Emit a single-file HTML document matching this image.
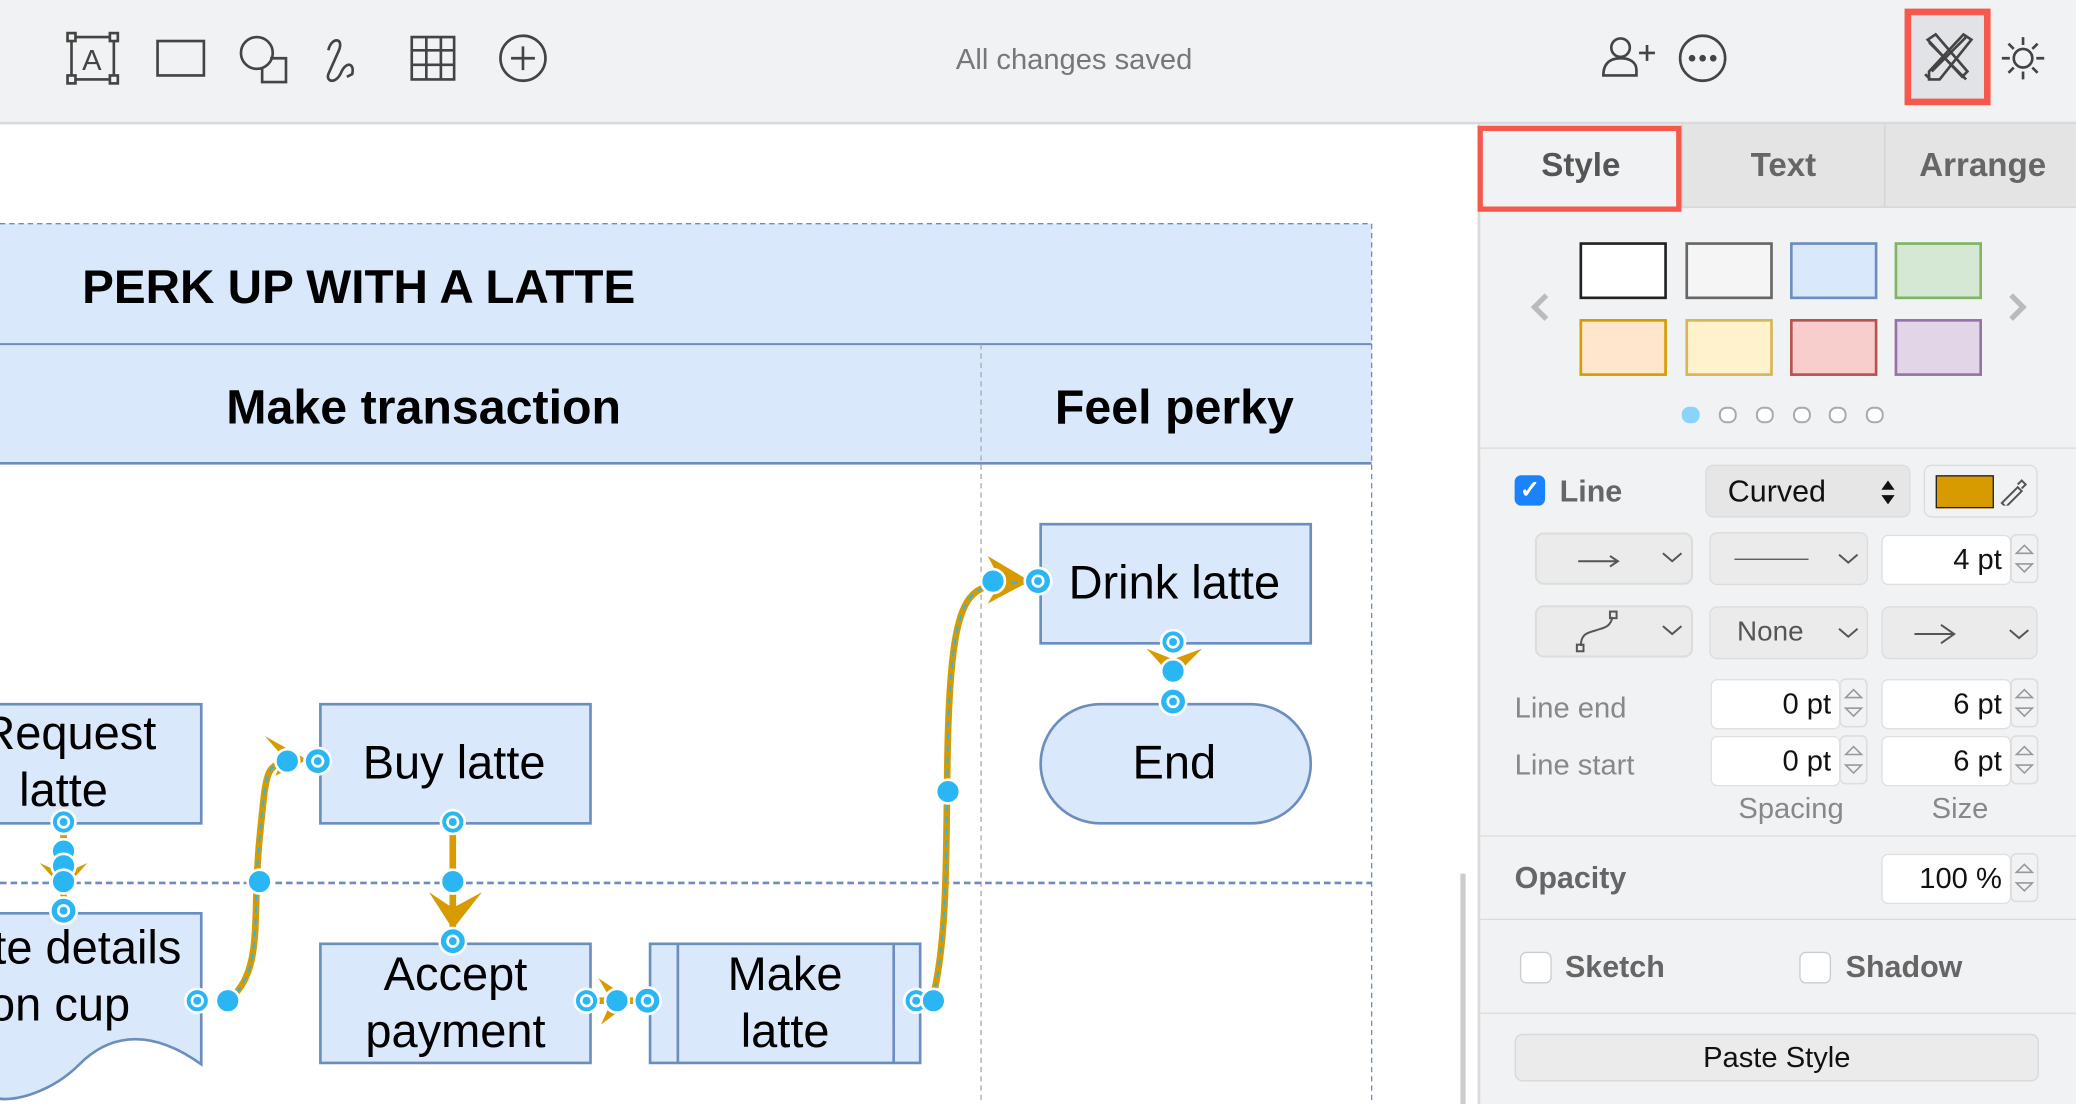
<!DOCTYPE html>
<html><head><meta charset="utf-8"><style>
html,body{margin:0;padding:0;width:2076px;height:1104px;overflow:hidden;background:#fff}
#r{position:absolute;left:0;top:0;width:1568px;height:834px;transform:scale(1.32398,1.3237);transform-origin:0 0;font-family:"Liberation Sans",sans-serif}
.a{position:absolute}
.tb{left:0;top:0;width:1568px;height:92px;background:#f1f2f4;border-bottom:2px solid #dadada}
.panel{left:1116px;top:94px;width:452px;height:740px;background:#f1f2f4;border-left:2px solid #dadada}
.tab{top:0;height:62px;line-height:62px;text-align:center;font-weight:bold;font-size:25px;color:#666;background:#e4e4e4;border-bottom:1px solid #d5d5d5}
.sw{width:66px;height:43px;box-sizing:border-box;border:2px solid}
.inp{height:38px;box-sizing:border-box;border:1px solid #e0e0e0;border-radius:5px;background:#fff;text-align:right;font-size:22px;line-height:36px;padding-right:6px;color:#111}
.lbl{font-size:22px;color:#888}
.cb{width:22px;height:22px;border:1px solid #ccc;border-radius:5px;background:#fff}
</style></head><body><div id="r">
<div class="a tb"></div>
<svg class="a" style="left:0;top:0" width="1568" height="92" fill="none" stroke="#444" stroke-width="2">
<rect x="54" y="28" width="32" height="32"/><rect x="51" y="25" width="6" height="6" fill="#f1f2f4"/><rect x="83" y="25" width="6" height="6" fill="#f1f2f4"/><rect x="51" y="57" width="6" height="6" fill="#f1f2f4"/><rect x="83" y="57" width="6" height="6" fill="#f1f2f4"/>
<text x="62" y="53" font-size="22" fill="#444" stroke="none" font-family="Liberation Sans">A</text>
<rect x="119" y="31" width="35" height="26"/>
<circle cx="194" cy="40" r="12"/><path d="M204 44h12v18h-18v-10"/>
<path d="M248 38c2-10 12-10 8 0l-8 18c-2 6 6 8 10-2 4-8 10-6 8 2l-4 2"/>
<rect x="311" y="28" width="32" height="32"/><path d="M311 38h32M311 49h32M322 28v32M333 28v32"/>
<circle cx="395" cy="44" r="17"/><path d="M395 35v18M386 44h18"/>
<circle cx="1224" cy="36" r="7"/><path d="M1211 57c0-10 6-13 13-13s12 3 12 9v4z"/><path d="M1238 40h12M1244 34v12"/>
<circle cx="1286" cy="44" r="17"/><circle cx="1278" cy="44" r="1.5" fill="#444"/><circle cx="1286" cy="44" r="1.5" fill="#444"/><circle cx="1294" cy="44" r="1.5" fill="#444"/>
<rect x="1441" y="9" width="60" height="68" fill="#e2e3e6" stroke="#f5594e" stroke-width="5"/>
<path d="M1457 32l28 28M1485 28l-26 26M1454 56l4 4M1456 30l6-4 24 28-4 4zM1483 26l6 4-24 30-8 0 0-6z" stroke-width="2"/>
<circle cx="1528" cy="44" r="7"/><path d="M1528 28v6M1528 54v6M1512 44h6M1538 44h6M1517 33l4 4M1535 51l4 4M1539 33l-4 4M1521 51l-4 4"/>
</svg>
<div class="a" style="left:722px;top:32px;font-size:22px;color:#777">All changes saved</div>

<svg class="a" style="left:0;top:94px" width="1116" height="740" font-family="Liberation Sans">
<rect x="0" y="75" width="1036" height="181" fill="#dae8fc"/>
<path d="M0 75H1036V740" stroke="#6c8ebf" stroke-dasharray="4 3" fill="none"/>
<line x1="0" y1="166" x2="1036" y2="166" stroke="#6c8ebf" stroke-width="1.5"/>
<line x1="0" y1="256" x2="1036" y2="256" stroke="#6c8ebf" stroke-width="2"/>
<line x1="741" y1="166" x2="741" y2="740" stroke="#aaa" stroke-dasharray="4 3"/>
<line x1="0" y1="573" x2="1036" y2="573" stroke="#6c8ebf" stroke-width="2" stroke-dasharray="5 3"/>
<text x="62" y="135" font-size="36" font-weight="bold">PERK UP WITH A LATTE</text>
<text x="320" y="226" font-size="36.5" font-weight="bold" text-anchor="middle">Make transaction</text>
<text x="887" y="226" font-size="36.5" font-weight="bold" text-anchor="middle">Feel perky</text>
<line x1="1105" y1="566" x2="1105" y2="740" stroke="#ccc" stroke-width="4"/>
<g fill="#dae8fc" stroke="#6c8ebf" stroke-width="2">
<rect x="-5" y="438" width="157" height="90"/>
<rect x="242" y="438" width="204" height="90"/>
<rect x="786" y="302" width="204" height="90"/>
<rect x="786" y="438" width="204" height="90" rx="45"/>
<path d="M-5 596H152V710C110 680 80 690 60 710S10 740 -5 735Z"/>
<rect x="242" y="619" width="204" height="90"/>
<rect x="491" y="619" width="204" height="90"/>
<path d="M512 619v90M675 619v90"/>
</g>
<g font-size="35.5" text-anchor="middle" fill="#000">
<text x="52" y="472">Request</text><text x="48" y="515">latte</text>
<text x="343" y="494">Buy latte</text>
<text x="887" y="358">Drink latte</text>
<text x="887" y="494">End</text>
<text x="62" y="634">ite details</text><text x="45" y="677">on cup</text>
<text x="344" y="654">Accept</text><text x="344" y="697">payment</text>
<text x="593" y="654">Make</text><text x="593" y="697">latte</text>
</g>
<g stroke="#d79b00" stroke-width="5" fill="none">
<path d="M172 662C200 640 190 600 196 540S200 485 225 480"/>
<path d="M48 526V590"/>
<path d="M342 526V610"/>
<path d="M448 662H488"/>
<path d="M704 662C720 600 712 500 718 420S740 350 775 345"/>
</g>
<g fill="#d79b00">
<path d="M200 462L232 480 208 492 214 478z"/>
<path d="M30 558L48 578 66 558 48 566z"/>
<path d="M324 580L342 608 364 580 342 592z"/>
<path d="M452 645L478 662 454 680 462 662z"/>
<path d="M746 326L778 345 746 362 756 345z"/>
<path d="M866 396L886 418 908 396 886 404z"/>
</g>
<g stroke="#29b6f2" stroke-width="1.5" stroke-dasharray="5 4" fill="none">
<path d="M172 662C200 640 190 600 196 540S200 485 225 480"/><path d="M704 662C720 600 712 500 718 420S740 350 775 345"/>
</g>
<g fill="#29b6f2" stroke="#fff" stroke-width="2">
<circle cx="48" cy="527" r="9"/><circle cx="48" cy="549" r="9"/><circle cx="48" cy="560" r="9"/><circle cx="48" cy="572" r="9"/><circle cx="48" cy="594" r="10"/>
<circle cx="342" cy="527" r="9"/><circle cx="342" cy="572" r="9"/><circle cx="342" cy="617" r="10"/>
<circle cx="217" cy="481" r="9"/><circle cx="240" cy="481" r="10"/><circle cx="196" cy="572" r="9"/>
<circle cx="149" cy="662" r="9"/><circle cx="172" cy="662" r="9"/>
<circle cx="443" cy="662" r="9"/><circle cx="466" cy="662" r="9"/><circle cx="489" cy="662" r="10"/>
<circle cx="692" cy="662" r="9"/><circle cx="705" cy="662" r="9"/><circle cx="716" cy="504" r="9"/>
<circle cx="750" cy="345" r="9"/><circle cx="784" cy="345" r="10"/>
<circle cx="886" cy="391" r="9"/><circle cx="886" cy="413" r="9"/><circle cx="886" cy="436" r="10"/>
</g>
<g fill="none" stroke="#fff" stroke-width="2">
<circle cx="48" cy="527" r="4"/><circle cx="48" cy="594" r="4"/><circle cx="342" cy="527" r="4"/><circle cx="342" cy="617" r="4"/><circle cx="240" cy="481" r="4"/><circle cx="149" cy="662" r="4"/><circle cx="443" cy="662" r="4"/><circle cx="489" cy="662" r="4"/><circle cx="692" cy="662" r="4"/><circle cx="784" cy="345" r="4"/><circle cx="886" cy="391" r="4"/><circle cx="886" cy="436" r="4"/>
</g>
</svg>

<div class="a panel">
<div class="a tab" style="left:0;width:152px;background:#f1f2f4;color:#555;border-bottom:none">Style</div>
<div class="a tab" style="left:152px;width:152px;border-left:1px solid #d5d5d5">Text</div>
<div class="a tab" style="left:305px;width:147px;border-left:1px solid #d5d5d5">Arrange</div>
</div>
<div class="a" style="left:1116px;top:95px;width:146px;height:57px;border:4px solid #f5594e"></div>
<svg class="a" style="left:1150px;top:215px" width="390" height="34" fill="none" stroke="#bbb" stroke-width="4"><path d="M18 8l-9 9 9 9M369 8l9 9-9 9"/></svg>
<div class="a sw" style="left:1193px;top:183px;background:#fff;border-color:#222"></div>
<div class="a sw" style="left:1273px;top:183px;background:#f5f5f5;border-color:#666"></div>
<div class="a sw" style="left:1352px;top:183px;background:#dae8fc;border-color:#6c8ebf"></div>
<div class="a sw" style="left:1431px;top:183px;background:#d5e8d4;border-color:#82b366"></div>
<div class="a sw" style="left:1193px;top:241px;background:#ffe6cc;border-color:#d79b00"></div>
<div class="a sw" style="left:1273px;top:241px;background:#fff2cc;border-color:#d6b656"></div>
<div class="a sw" style="left:1352px;top:241px;background:#f8cecc;border-color:#b85450"></div>
<div class="a sw" style="left:1431px;top:241px;background:#e1d5e7;border-color:#9673a6"></div>
<svg class="a" style="left:1260px;top:300px" width="180" height="30"><g stroke="#aaa" fill="#fff" stroke-width="1.5"><rect x="11" y="8" width="12" height="11" rx="5" fill="#8ad4fb" stroke="#8ad4fb"/><rect x="39" y="8" width="12" height="11" rx="5"/><rect x="67" y="8" width="12" height="11" rx="5"/><rect x="95" y="8" width="12" height="11" rx="5"/><rect x="122" y="8" width="12" height="11" rx="5"/><rect x="150" y="8" width="12" height="11" rx="5"/></g></svg>
<div class="a" style="left:1118px;top:338px;width:450px;border-top:1.5px solid #dcdcdc"></div>
<div class="a" style="left:1144px;top:359px;width:23px;height:23px;border-radius:5px;background:#1a82fb;color:#fff;font-size:18px;text-align:center;line-height:23px;font-weight:bold">✓</div>
<div class="a" style="left:1178px;top:358px;font-size:23px;font-weight:bold;color:#666">Line</div>
<div class="a" style="left:1288px;top:351px;width:155px;height:40px;box-sizing:border-box;border:1.5px solid #dcdcdc;border-radius:6px;font-size:23px;line-height:38px;padding-left:16px;color:#111;background:#e6e6e6">Curved<svg class="a" style="right:10px;top:10px" width="12" height="20"><path d="M6 1l5 7H1zM6 19l5-7H1z" fill="#111"/></svg></div>
<div class="a" style="left:1453px;top:351px;width:86px;height:40px;box-sizing:border-box;border:1.5px solid #dcdcdc;border-radius:6px;background:#f1f2f4"><div class="a" style="left:8px;top:7px;width:42px;height:23px;background:#d79b00;border:1.5px solid #222"></div><svg class="a" style="left:56px;top:8px" width="22" height="22" fill="none" stroke="#555" stroke-width="1.5"><path d="M2 20l12-12 3 3-12 12zM14 6l3-3 3 3-3 3"/></svg></div>
<svg class="a" style="left:1158px;top:402px" width="390" height="100" fill="none" stroke="#555" stroke-width="1.5">
<rect x="2" y="1" width="118" height="38" rx="6" fill="#ebebeb" stroke="#dcdcdc"/>
<rect x="2" y="56" width="118" height="38" rx="6" fill="#ebebeb" stroke="#dcdcdc"/>
<path d="M34 22h30M58 18l6 4-6 4" /><path d="M98 16l7 6 7-6"/>
<path d="M98 71l7 6 7-6"/>
<path d="M36 86c0-10 6-10 12-12s10-2 12-10"/><rect x="33" y="85" width="5" height="5"/><rect x="58" y="60" width="5" height="5"/>
</svg>
<div class="a" style="left:1291px;top:402px;width:120px;height:40px;background:#ebebeb;border:1.5px solid #dcdcdc;border-radius:6px;box-sizing:border-box"><div class="a" style="left:18px;top:19px;width:56px;border-top:1.5px solid #555"></div><svg class="a" style="left:96px;top:14px" width="18" height="12"><path d="M1 2l7 6 7-6" stroke="#555" stroke-width="1.5" fill="none"/></svg></div>
<div class="a" style="left:1291px;top:458px;width:120px;height:40px;background:#ebebeb;border:1.5px solid #dcdcdc;border-radius:6px;box-sizing:border-box;font-size:21px;line-height:38px;padding-left:20px;color:#555">None<svg class="a" style="left:96px;top:14px" width="18" height="12"><path d="M1 2l7 6 7-6" stroke="#555" stroke-width="1.5" fill="none"/></svg></div>
<div class="a" style="left:1421px;top:458px;width:118px;height:40px;background:#ebebeb;border:1.5px solid #dcdcdc;border-radius:6px;box-sizing:border-box"><svg class="a" style="left:22px;top:10px" width="90" height="20"><path d="M2 10h30M22 3l10 7-10 7M74 7l7 6 7-6" stroke="#555" stroke-width="1.5" fill="none"/></svg></div>
<div class="a inp" style="left:1421px;top:404px;width:98px">4 pt</div>
<div class="a inp" style="left:1292px;top:513px;width:98px">0 pt</div>
<div class="a inp" style="left:1421px;top:513px;width:98px">6 pt</div>
<div class="a inp" style="left:1292px;top:556px;width:98px">0 pt</div>
<div class="a inp" style="left:1421px;top:556px;width:98px">6 pt</div>
<div class="a inp" style="left:1421px;top:645px;width:98px">100 %</div>
<svg class="a" style="left:1390px;top:400px" width="160" height="290" fill="none" stroke="#999" stroke-width="1.2">
<g id="s"><rect x="129" y="4" width="20" height="36" rx="4" stroke="#ddd"/><path d="M133 18l6-6 6 6zM133 26l6 6 6-6z"/></g>
<use href="#s" y="109"/><use href="#s" y="152"/><use href="#s" y="241"/>
<use href="#s" x="-129" y="109"/><use href="#s" x="-129" y="152"/>
</svg>
<div class="a lbl" style="left:1144px;top:522px">Line end</div>
<div class="a lbl" style="left:1144px;top:565px">Line start</div>
<div class="a lbl" style="left:1313px;top:598px">Spacing</div>
<div class="a lbl" style="left:1459px;top:598px">Size</div>
<div class="a" style="left:1118px;top:631px;width:450px;border-top:1.5px solid #dcdcdc"></div>
<div class="a" style="left:1144px;top:650px;font-size:23px;font-weight:bold;color:#666">Opacity</div>
<div class="a" style="left:1118px;top:694px;width:450px;border-top:1.5px solid #dcdcdc"></div>
<div class="a cb" style="left:1148px;top:719px"></div>
<div class="a" style="left:1182px;top:717px;font-size:23px;font-weight:bold;color:#666">Sketch</div>
<div class="a cb" style="left:1359px;top:719px"></div>
<div class="a" style="left:1394px;top:717px;font-size:23px;font-weight:bold;color:#666">Shadow</div>
<div class="a" style="left:1118px;top:765px;width:450px;border-top:1.5px solid #dcdcdc"></div>
<div class="a" style="left:1144px;top:781px;width:396px;height:36px;box-sizing:border-box;border:1.5px solid #d8d8d8;border-radius:6px;background:#ebebeb;text-align:center;font-size:22px;line-height:33px;color:#111">Paste Style</div>
</div></body></html>
